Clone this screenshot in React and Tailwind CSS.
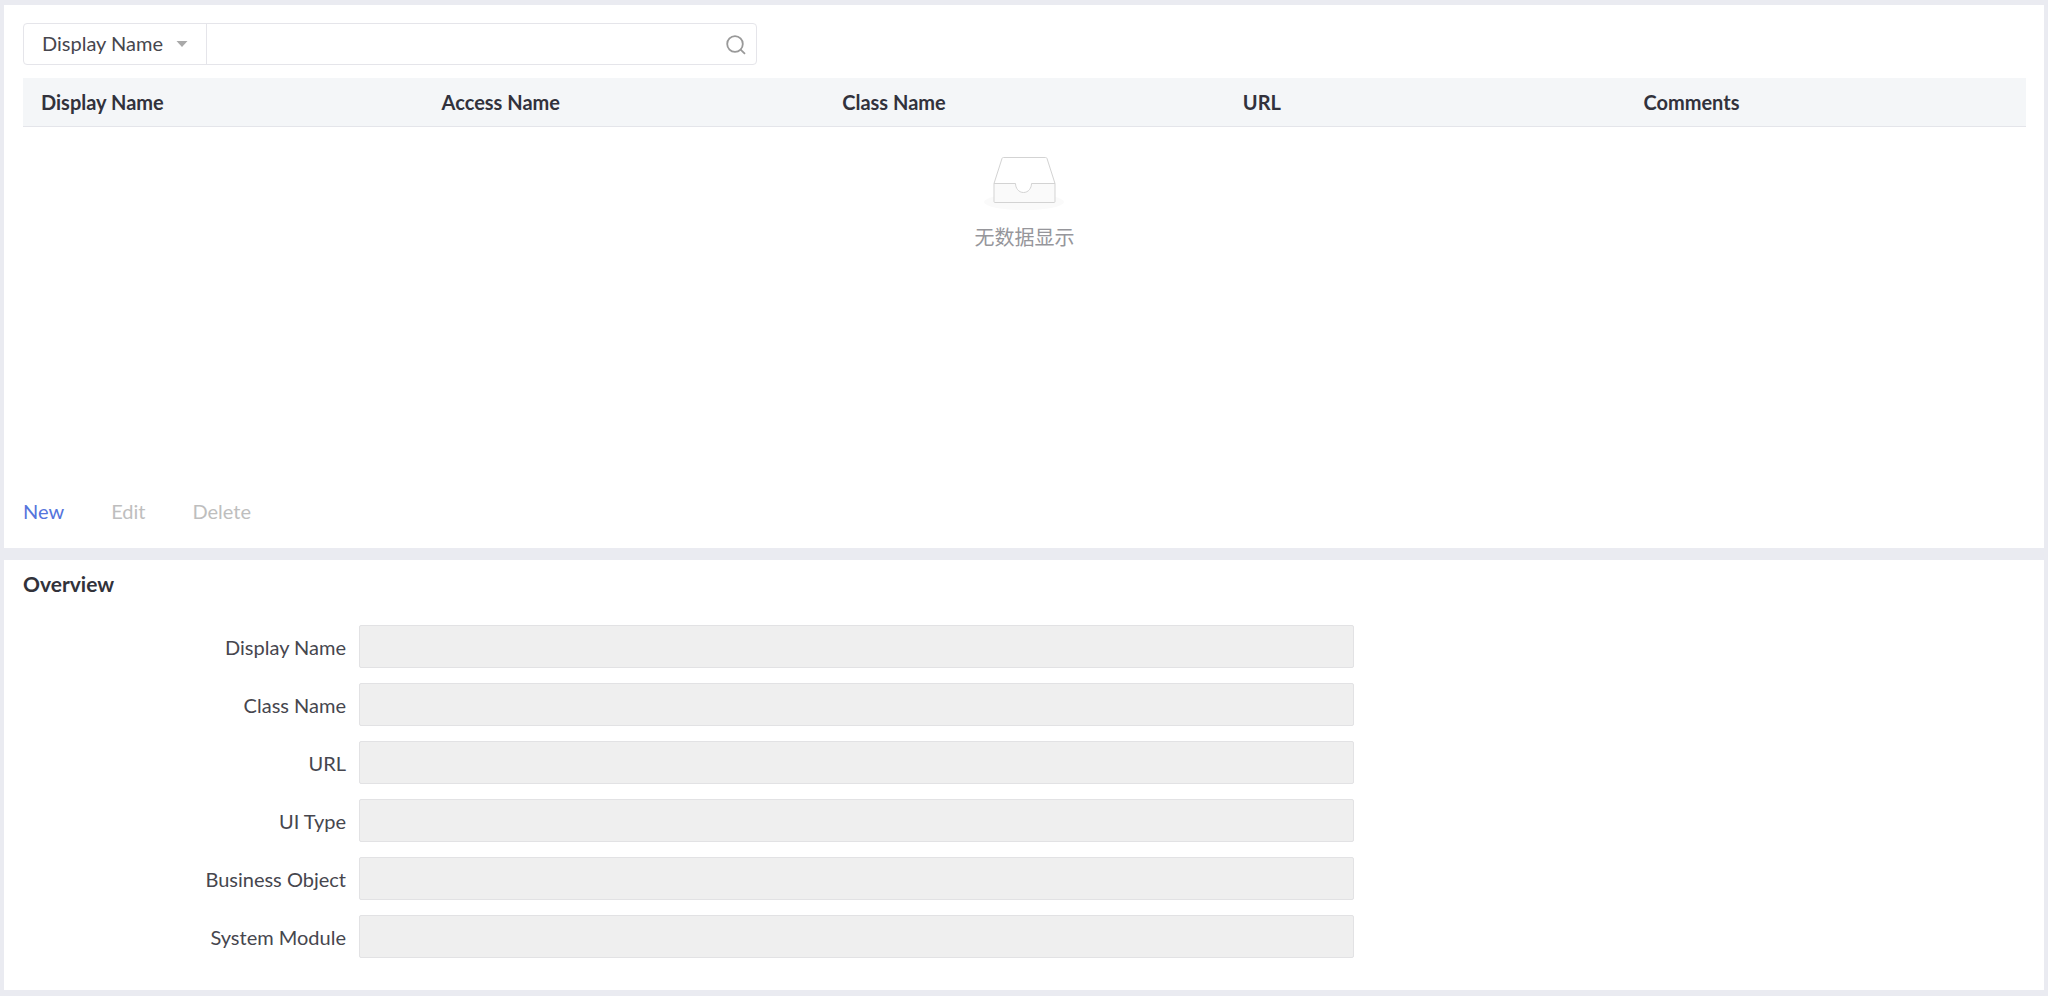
import React, { useState } from 'react'

const columns = ['Display Name', 'Access Name', 'Class Name', 'URL', 'Comments']

const overviewFields = [
  { id: 'displayName', label: 'Display Name' },
  { id: 'className', label: 'Class Name' },
  { id: 'url', label: 'URL' },
  { id: 'uiType', label: 'UI Type' },
  { id: 'businessObject', label: 'Business Object' },
  { id: 'systemModule', label: 'System Module' },
]

const EmptyTray = () => (
  <svg width="84" height="56" viewBox="0 0 84 56" fill="none" aria-hidden="true">
    <ellipse cx="41" cy="46" rx="40" ry="8" fill="#fafafa" />
    <path d="M11 27.5L19 2.5Q19.3 1.5 20.5 1.5H62.5Q63.7 1.5 64 2.5L72 27.5V46.5H11Z" fill="#fff" />
    <path
      d="M11 27.5H32.5C32.5 32 35.5 36.5 40.5 36.5S48.5 32 48.5 27.5H72V45.5Q72 46.5 71 46.5H12Q11 46.5 11 45.5Z"
      fill="#fafafa"
      stroke="#d3d3d3"
    />
    <path d="M11 27.5L19 2.5Q19.3 1.5 20.5 1.5H62.5Q63.7 1.5 64 2.5L72 27.5" stroke="#d3d3d3" />
  </svg>
)

const SearchBar = () => {
  const [field, setField] = useState('Display Name')
  const [query, setQuery] = useState('')

  return (
    <div className="flex h-[42px] w-full max-w-[734px] rounded border border-[#e5e5ea]">
      <div className="relative flex border-r border-[#e5e5ea]">
        <select
          aria-label="Search field"
          value={field}
          onChange={(e) => setField(e.target.value)}
          className="w-[182px] appearance-none bg-transparent pb-0.5 pl-[18px] text-[20px] outline-none"
        >
          {columns.map((c) => (
            <option key={c}>{c}</option>
          ))}
        </select>
        <svg
          width="12"
          height="6"
          viewBox="0 0 12 6"
          className="pointer-events-none absolute top-[17px] right-[18px]"
          aria-hidden="true"
        >
          <path d="M0.5 0H11.5L6 6Z" fill="#a9a9a9" />
        </svg>
      </div>
      <input
        type="text"
        aria-label="Search text"
        value={query}
        onChange={(e) => setQuery(e.target.value)}
        className="min-w-0 flex-1 px-3 text-[20px] outline-none"
      />
      <button type="button" aria-label="Search" className="px-[10px] pt-px">
        <svg width="20" height="20" viewBox="0 0 20 20" fill="none" stroke="#999" strokeWidth="1.8" aria-hidden="true">
          <circle cx="9" cy="9" r="7.8" />
          <path d="M14.6 14.6L19 18.8" />
        </svg>
      </button>
    </div>
  )
}

const DataTable = () => (
  <table className="mt-[13px] w-full table-fixed">
    <thead>
      <tr className="h-12 border-b border-[#e4e5ea] bg-[#f4f6f8]">
        {columns.map((c) => (
          <th key={c} className="px-[18px] text-left text-[20px] font-bold text-[#32323c]">
            {c}
          </th>
        ))}
      </tr>
    </thead>
    <tbody>
      <tr>
        <td colSpan={columns.length} className="pt-[29px]">
          <div className="flex flex-col items-center gap-3 text-[20px] leading-[26px] text-[#96969b]">
            <EmptyTray />
            <span>无数据显示</span>
          </div>
        </td>
      </tr>
    </tbody>
  </table>
)

const App = () => (
  <div className="flex min-h-screen flex-col gap-3 bg-[#eaebf1] px-1 pt-[5px] pb-[6px] font-['Lato','Noto_Sans_CJK_SC',sans-serif] text-[20px] text-[#46464e]">
    <section className="bg-white pt-[18px] pr-[18px] pb-[14px] pl-[19px]">
      <SearchBar />
      <div className="min-h-[411px]">
        <DataTable />
      </div>
      <div className="flex gap-[47px] leading-[45px]">
        <button type="button" className="text-[#5574dc]">New</button>
        <button type="button" disabled className="text-[#bebebe]">Edit</button>
        <button type="button" disabled className="text-[#bebebe]">Delete</button>
      </div>
    </section>

    <section className="flex-1 bg-white pt-2 pr-[18px] pb-8 pl-[19px]">
      <h2 className="text-[21px] leading-8 font-bold text-[#32323a]">Overview</h2>
      <form className="mt-[25px] flex w-2/3 flex-col gap-[15px] pr-1">
        {overviewFields.map((f) => (
          <div key={f.id} className="flex items-center gap-[13px]">
            <label htmlFor={f.id} className="w-[323px] shrink-0 text-right">
              {f.label}
            </label>
            <input
              id={f.id}
              type="text"
              disabled
              className="h-[43px] min-w-0 flex-1 rounded-xs border border-[#e2e2e4] bg-[#efefef] px-3"
            />
          </div>
        ))}
      </form>
    </section>
  </div>
)

export default App
